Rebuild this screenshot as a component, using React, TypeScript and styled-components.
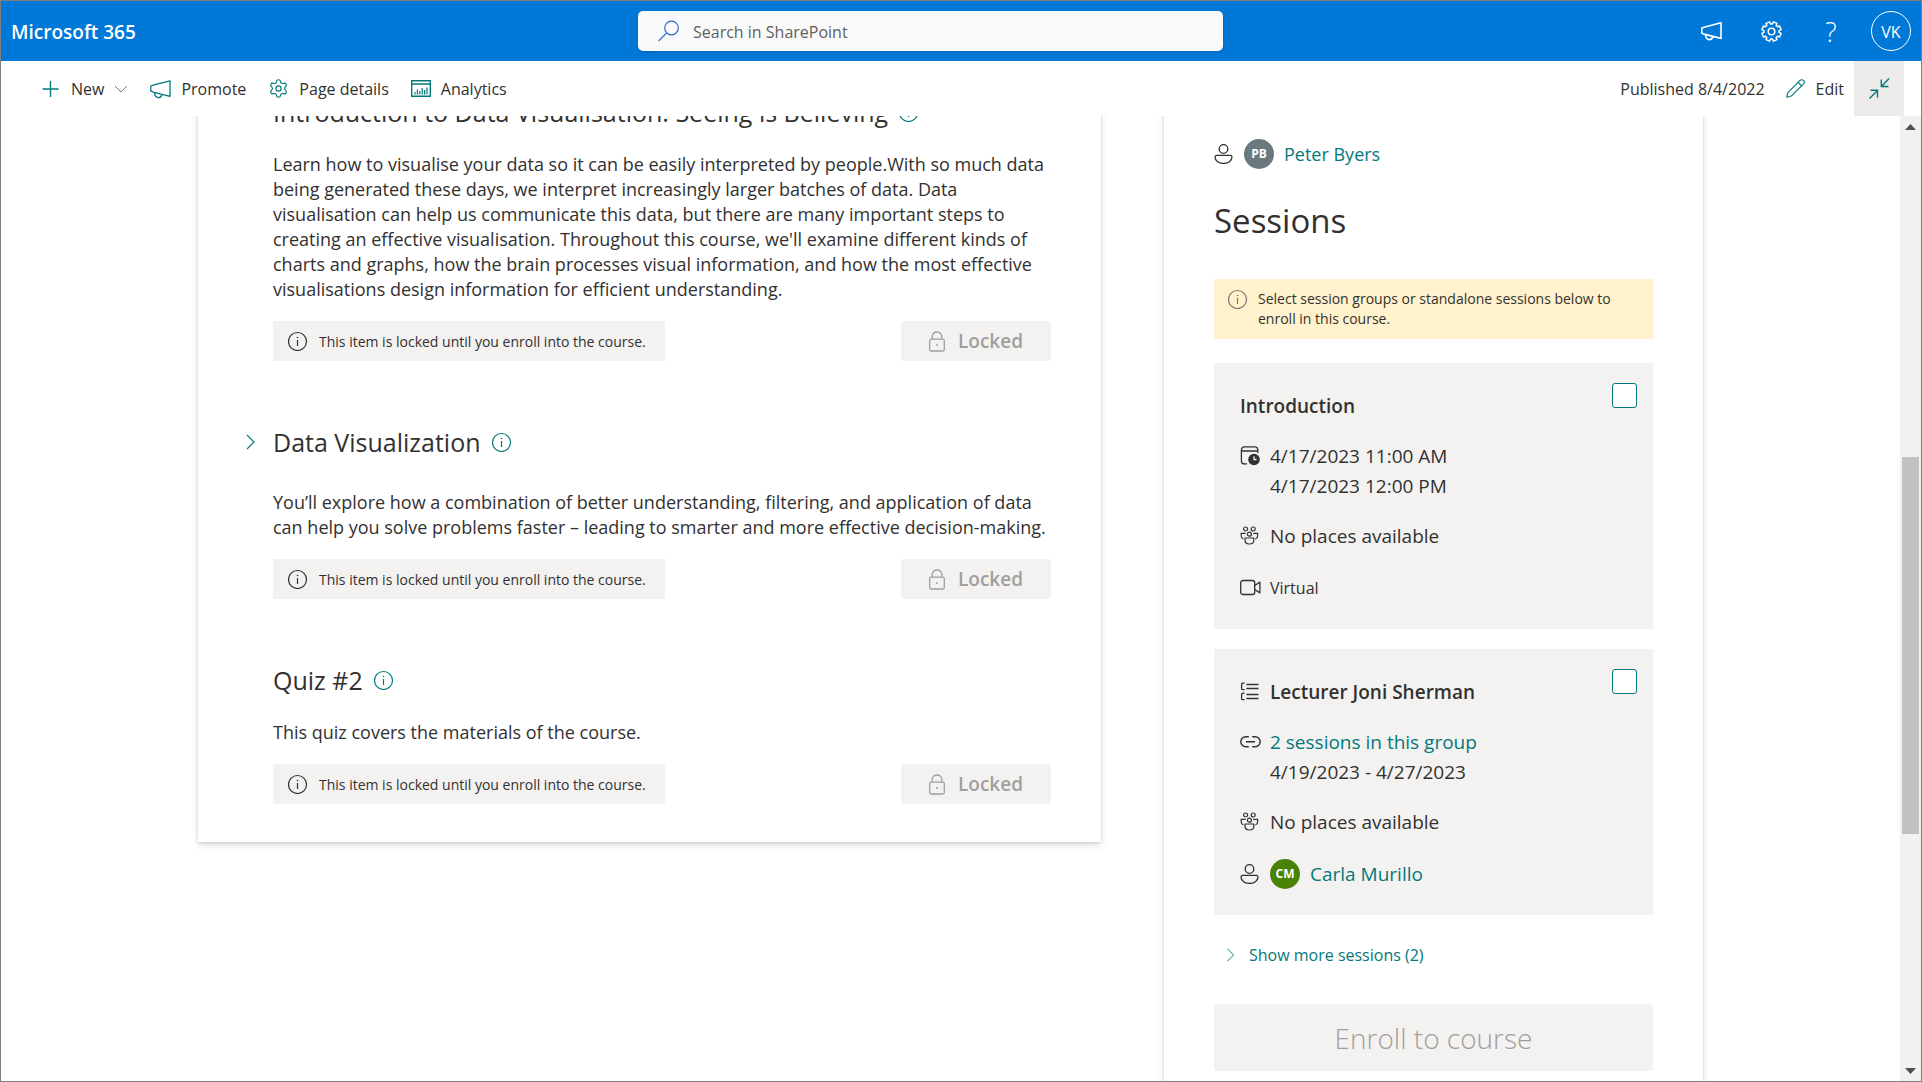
import React from "react";
import styled, { createGlobalStyle } from "styled-components";
import { Pencil, Settings } from "lucide-react";

const teal = "#03787c";
const ink = "#323130";
const wash = "#f3f2f1";
const muted = "#a19f9d";

const GlobalStyle = createGlobalStyle`
  *, *::before, *::after { box-sizing: border-box; }
  body { margin: 0; background: #fff; color: ${ink}; font: 18px/25px "Open Sans", "Noto Sans", sans-serif; }
  h1, h2, h3, p { margin: 0; font-weight: 400; }
  button, input { font: inherit; color: inherit; }
  button { border: 0; background: none; padding: 0; cursor: pointer; }
  a { color: ${teal}; text-decoration: none; }
  svg { display: block; flex: none; }
`;

/* ---------- icons ---------- */

const Glyph = ({ w = 20, h = 20, sw = 1.2, children }: { w?: number; h?: number; sw?: number; children: React.ReactNode }) => (
  <svg width={w} height={h} viewBox={`0 0 ${w} ${h}`} fill="none" stroke="currentColor" strokeWidth={sw} aria-hidden="true">
    {children}
  </svg>
);

const InfoIcon = () => (
  <Glyph>
    <circle cx="9.5" cy="10.5" r="9" />
    <path d="M9.5 9V15" />
    <circle cx="9.5" cy="6.5" r="0.8" fill="currentColor" stroke="none" />
  </Glyph>
);

const PlusIcon = () => (
  <Glyph sw={1.4}><path d="M9.5 2V18M1.5 10H17.5" /></Glyph>
);

const ChevronDown = () => (
  <Glyph w={14} h={14} sw={1}><path d="M1 4L7 10L13 4" /></Glyph>
);

const ChevronRight = ({ size = 16 }: { size?: number }) => (
  <svg width={size} height={size} viewBox="0 0 16 16" fill="none" stroke="currentColor" strokeWidth="1.1" aria-hidden="true">
    <path d="M4 1L11 8L4 15" />
  </svg>
);

const MegaphoneIcon = ({ sw = 1.3 }: { sw?: number }) => (
  <Glyph w={21} sw={sw}>
    <path d="M0.8 7L4 5.9L20 1.8V17.4L4 13.4L0.8 12.2Z" strokeLinejoin="round" />
    <path d="M4.6 13.6C4.6 16.6 6.2 18.6 8.3 18.6C10.2 18.6 11.5 17.4 11.9 15.5" />
  </Glyph>
);

const gearPath = (() => {
  const pts: string[] = [];
  const teeth = 8;
  for (let i = 0; i < teeth; i++) {
    const mid = (i / teeth) * Math.PI * 2 + Math.PI / 8;
    [[-0.27, 7.6], [-0.2, 9.8], [0.2, 9.8], [0.27, 7.6]].forEach(([d, r]) => {
      pts.push(`${(10.5 + Math.cos(mid + d) * r).toFixed(2)} ${(10.5 + Math.sin(mid + d) * r).toFixed(2)}`);
    });
  }
  return `M${pts.join("L")}Z`;
})();

const GearIcon = () => (
  <Glyph w={21} h={21} sw={1.5}>
    <path d={gearPath} strokeLinejoin="round" />
    <circle cx="10.5" cy="10.5" r="3.3" />
  </Glyph>
);

const SearchIcon = () => (
  <Glyph w={22} h={22} sw={1.2}>
    <circle cx="13.5" cy="8" r="6.8" />
    <path d="M8.7 12.8L0.6 21" />
  </Glyph>
);

const AnalyticsIcon = () => (
  <Glyph sw={1.4}>
    <path d="M0.7 1.7H19.3V17.3H0.7ZM0.7 5H19.3" />
    <path d="M4 15.5V13M6.4 15.5V10.5M8.8 15.5V12M11.2 15.5V9M13.6 15.5V11M16 15.5V8.5" strokeWidth="1.2" />
  </Glyph>
);

const CollapseIcon = () => (
  <Glyph w={21} h={21} sw={1.4}>
    <path d="M20 0.5L12.5 8.5M12.3 1.5V8.5H19.5" />
    <path d="M0.5 20.5L8.5 12.5M1.5 12.3H8.5V19.5" />
  </Glyph>
);

const LockIcon = () => (
  <Glyph w={16} h={21} sw={1.3}>
    <rect x="0.7" y="8.2" width="14.6" height="11.8" rx="1.5" />
    <path d="M3.2 8V5.6C3.2 2.9 5.3 1 8 1C10.7 1 12.8 2.9 12.8 5.6V8" />
    <circle cx="8" cy="14" r="1" fill="currentColor" stroke="none" />
  </Glyph>
);

const PersonIcon = () => (
  <Glyph sw={1.3}>
    <circle cx="9.5" cy="5" r="4.3" />
    <path d="M2.5 11.4H16.5A1.6 1.6 0 0 1 18 13C18 17 13.9 19.4 9.5 19.4S1 17 1 13A1.6 1.6 0 0 1 2.5 11.4Z" />
  </Glyph>
);

const CalendarIcon = () => (
  <Glyph sw={1.3}>
    <path d="M7 17.9H4.4A3 3 0 0 1 1.4 14.9V3.9A3 3 0 0 1 4.4 0.9H14.8A3 3 0 0 1 17.8 3.9V7M1.4 5H17.8" />
    <circle cx="14" cy="13.5" r="5.8" fill="currentColor" stroke="none" />
    <path d="M14 10.3V13.5H16.6" stroke={wash} />
  </Glyph>
);

const PeopleIcon = () => (
  <Glyph sw={1.2}>
    <circle cx="5.6" cy="3" r="2" />
    <circle cx="13.2" cy="3" r="2" />
    <circle cx="9.4" cy="8.2" r="2" />
    <path d="M5 12H13.8V14.2C13.8 16.6 11.8 18 9.4 18S5 16.6 5 14.2Z" strokeLinejoin="round" />
    <path d="M5.6 7.4H1.2V10C1.2 11.5 2.1 12.5 3.4 13M13.2 7.4H17.6V10C17.6 11.5 16.7 12.5 15.4 13" />
  </Glyph>
);

const VideoIcon = () => (
  <Glyph w={21} sw={1.3}>
    <rect x="0.7" y="2.5" width="14" height="14" rx="2.2" />
    <path d="M14.7 7.5L19.9 4.1V14.9L14.7 11.5" strokeLinejoin="round" />
  </Glyph>
);

const GroupListIcon = () => (
  <Glyph sw={1.3}>
    <path d="M4.6 1.1H2.8A1.2 1.2 0 0 0 1.6 2.3V6.5A1.2 1.2 0 0 0 2.8 7.7H4.6M4.6 11.1H2.8A1.2 1.2 0 0 0 1.6 12.3V16.5A1.2 1.2 0 0 0 2.8 17.7H4.6" />
    <path d="M6.4 2.5H18.5M6.4 6.5H18.5M6.4 12.5H18.5M6.4 16.5H18.5" />
  </Glyph>
);

const LinkIcon = () => (
  <Glyph w={21} sw={1.4}>
    <path d="M8.8 4.8H5.8A5 5 0 0 0 5.8 14.8H8.8M12.2 4.8H15.2A5 5 0 0 1 15.2 14.8H12.2M6 9.8H15" />
  </Glyph>
);

/* ---------- shell ---------- */

const Shell = styled.div`
  display: flex;
  flex-direction: column;
  height: 100vh;
  border: 1px solid #7f7f7f;
  overflow: hidden;
`;

const SuiteBar = styled.header`
  display: grid;
  grid-template-columns: 637fr 585fr 698fr;
  align-items: center;
  flex: none;
  height: 60px;
  background: #0078d7;
  color: #fff;
`;

const Brand = styled.a`
  display: block;
  padding: 2px 0 0 10px;
  color: #fff;
  font-size: 19px;
  font-weight: 600;
`;

const SearchBox = styled.label`
  display: flex;
  align-items: center;
  gap: 13px;
  height: 40px;
  padding: 0 20px;
  border-radius: 5px;
  background: #fafafa;
  color: #2b6cc4;
  box-shadow: 0 1px 3px rgba(0, 0, 0, 0.2);
`;

const SearchInput = styled.input`
  flex: 1;
  min-width: 0;
  border: 0;
  outline: 0;
  padding: 2px 0 0;
  background: none;
  color: #605e5c;
  font-size: 16px;
  &::placeholder { color: #605e5c; opacity: 1; }
`;

const SuiteActions = styled.nav`
  display: flex;
  justify-content: flex-end;
`;

const SuiteButton = styled.button`
  display: grid;
  place-items: center;
  width: 60px;
  height: 60px;
  font-size: 27px;
  font-weight: 300;
`;

const MeCircle = styled.span`
  display: grid;
  place-items: center;
  width: 40px;
  height: 40px;
  padding-top: 2px;
  border: 1px solid #fff;
  border-radius: 50%;
  font-size: 16px;
  font-weight: 500;
`;

const CommandBar = styled.div`
  display: flex;
  align-items: center;
  justify-content: space-between;
  flex: none;
  height: 55px;
  padding: 0 17px 0 30px;
  background: #fff;
`;

const CommandGroup = styled.div<{ $gap?: number }>`
  display: flex;
  align-items: center;
  gap: ${(p) => p.$gap ?? 0}px;
`;

const Command = styled.button`
  display: flex;
  align-items: center;
  gap: 10px;
  padding: 0 10px;
  font-size: 16px;
`;

const CommandIcon = styled.span`
  display: flex;
  color: ${teal};
`;

const CommandLabel = styled.span`
  padding-top: 2px;
`;

const Faint = styled.span`
  color: #797775;
`;

const Published = styled.span`
  padding: 2px 10px 0;
  font-size: 16px;
`;

const CollapseButton = styled.button`
  display: grid;
  place-items: center;
  width: 50px;
  height: 55px;
  background: #edebe9;
  color: ${teal};
`;

const Body = styled.div`
  display: flex;
  flex: 1;
  min-height: 0;
`;

const Viewport = styled.main`
  flex: 1;
  min-width: 0;
  overflow: hidden;
`;

/* The page sits part way down its scroll range. */
const Columns = styled.div`
  display: grid;
  grid-template-columns: 903fr 539fr;
  column-gap: 63px;
  align-items: start;
  max-width: 1505px;
  margin: -60px auto 0;
`;

const Sheet = styled.section`
  background: #fff;
  box-shadow: 0 3px 7px rgba(0, 0, 0, 0.13), 0 1px 2px rgba(0, 0, 0, 0.12);
`;

/* ---------- scroll bar ---------- */

const ScrollBar = styled.div`
  display: flex;
  flex-direction: column;
  flex: none;
  width: 21px;
  background: #f1f1f1;
`;

const ScrollArrow = styled.span`
  display: grid;
  place-items: center;
  height: 21px;
  color: #505050;
`;

const ScrollSpace = styled.span<{ $share: number }>`
  flex: ${(p) => p.$share};
`;

const ScrollThumb = styled.span`
  flex: 377;
  margin: 0 2px;
  background: #c1c1c1;
`;

/* ---------- course items ---------- */

const ItemList = styled(Sheet)`
  display: flex;
  flex-direction: column;
  gap: 65px;
  padding: 40px 50px 38px 75px;
`;

const ItemHead = styled.div<{ $spaced?: boolean }>`
  display: flex;
  align-items: center;
  gap: 11px;
  margin-bottom: ${(p) => (p.$spaced ? 32 : 24)}px;
  color: ${teal};
`;

const ExpandButton = styled.button`
  display: flex;
  justify-content: center;
  width: 22px;
  margin-left: -33px;
  color: ${teal};
`;

const ItemTitle = styled.h2`
  color: ${ink};
  font-size: 25px;
  line-height: 32px;
`;

const ItemText = styled.p`
  margin-bottom: 19px;
`;

const ItemFoot = styled.div`
  display: flex;
  justify-content: space-between;
`;

const Notice = styled.div`
  display: flex;
  align-items: center;
  gap: 11px;
  height: 40px;
  padding: 0 19px 0 15px;
  background: ${wash};
  font-size: 14px;
`;

const LockedButton = styled.button`
  display: flex;
  align-items: center;
  justify-content: center;
  gap: 13px;
  width: 150px;
  height: 40px;
  border-radius: 3px;
  background: ${wash};
  color: ${muted};
  font-size: 19px;
  font-weight: 600;
`;

/* ---------- sessions ---------- */

const SidePanel = styled(Sheet)`
  padding: 81px 50px 60px;
`;

const SideTitle = styled.h1`
  margin: 26px 0 34px;
  font-size: 33px;
  line-height: 48px;
`;

const Banner = styled.div`
  display: flex;
  gap: 10px;
  padding: 10px 14px;
  margin-bottom: 24px;
  background: #fff2cc;
  font-size: 14px;
  line-height: 20px;
`;

const BannerIcon = styled.span`
  color: #797775;
`;

const CardList = styled.div`
  display: flex;
  flex-direction: column;
  gap: 20px;
`;

const Card = styled.article`
  display: flex;
  justify-content: space-between;
  align-items: flex-start;
  padding: 20px 16px 24px 26px;
  background: ${wash};
`;

const CardRows = styled.div`
  display: flex;
  flex-direction: column;
  gap: 20px;
  padding-top: 8px;
  font-size: 19px;
`;

const Row = styled.div<{ $tall?: boolean; $small?: boolean }>`
  display: flex;
  align-items: ${(p) => (p.$tall ? "center" : "flex-start")};
  gap: 10px;
  min-height: ${(p) => (p.$tall ? 34 : 30)}px;
  font-size: ${(p) => (p.$small ? "16px" : "inherit")};
  line-height: 30px;
`;

const RowIcon = styled.span`
  display: flex;
  align-items: center;
  justify-content: center;
  width: 20px;
  height: 30px;
`;

const CardTitle = styled.h3`
  font-size: 19px;
  font-weight: 600;
  line-height: 30px;
`;

const Check = styled.input`
  appearance: none;
  width: 25px;
  height: 25px;
  margin: 0;
  border: 1px solid ${teal};
  border-radius: 3px;
  background: #fff;
`;

const Avatar = styled.span<{ $color: string }>`
  display: grid;
  place-items: center;
  width: 30px;
  height: 30px;
  border-radius: 50%;
  background: ${(p) => p.$color};
  color: #fff;
  font-size: 12px;
  font-weight: 700;
`;

const ShowMore = styled.button`
  display: flex;
  align-items: center;
  gap: 11px;
  margin: 28px 0 37px;
  padding-left: 10px;
  color: ${teal};
  font-size: 16px;
  line-height: 24px;
`;

const EnrollButton = styled.button`
  display: block;
  width: 100%;
  height: 67px;
  padding-top: 2px;
  border-radius: 3px;
  background: ${wash};
  color: ${muted};
  font-size: 28px;
  font-weight: 300;
`;

const items = [
  {
    title: "Introduction to Data Visualisation: Seeing is Believing",
    text: "Learn how to visualise your data so it can be easily interpreted by people.With so much data being generated these days, we interpret increasingly larger batches of data. Data visualisation can help us communicate this data, but there are many important steps to creating an effective visualisation. Throughout this course, we'll examine different kinds of charts and graphs, how the brain processes visual information, and how the most effective visualisations design information for efficient understanding.",
  },
  {
    title: "Data Visualization",
    expandable: true,
    text: "You’ll explore how a combination of better understanding, filtering, and application of data can help you solve problems faster – leading to smarter and more effective decision-making.",
  },
  { title: "Quiz #2", text: "This quiz covers the materials of the course." },
];

const Person = ({ initials, color, name }: { initials: string; color: string; name: string }) => (
  <Row $tall>
    <RowIcon><PersonIcon /></RowIcon>
    <Avatar $color={color}>{initials}</Avatar>
    <a href="#profile">{name}</a>
  </Row>
);

export default function App() {
  return (
    <>
      <GlobalStyle />
      <Shell>
        <SuiteBar>
          <div><Brand href="#home">Microsoft 365</Brand></div>
          <SearchBox>
            <SearchIcon />
            <SearchInput type="text" placeholder="Search in SharePoint" aria-label="Search in SharePoint" />
          </SearchBox>
          <SuiteActions>
            <SuiteButton aria-label="Announcements"><MegaphoneIcon sw={1.6} /></SuiteButton>
            <SuiteButton aria-label="Settings"><GearIcon /></SuiteButton>
            <SuiteButton aria-label="Help">?</SuiteButton>
            <SuiteButton aria-label="Account"><MeCircle>VK</MeCircle></SuiteButton>
          </SuiteActions>
        </SuiteBar>

        <CommandBar>
          <CommandGroup $gap={2}>
            <Command>
              <CommandIcon><PlusIcon /></CommandIcon>
              <CommandLabel>New</CommandLabel>
              <Faint><ChevronDown /></Faint>
            </Command>
            <Command><CommandIcon><MegaphoneIcon /></CommandIcon><CommandLabel>Promote</CommandLabel></Command>
            <Command><CommandIcon><Settings size={21} strokeWidth={1.3} /></CommandIcon><CommandLabel>Page details</CommandLabel></Command>
            <Command><CommandIcon><AnalyticsIcon /></CommandIcon><CommandLabel>Analytics</CommandLabel></Command>
          </CommandGroup>
          <CommandGroup>
            <Published>Published 8/4/2022</Published>
            <Command><CommandIcon><Pencil size={21} strokeWidth={1.3} /></CommandIcon><CommandLabel>Edit</CommandLabel></Command>
            <CollapseButton aria-label="Collapse"><CollapseIcon /></CollapseButton>
          </CommandGroup>
        </CommandBar>

        <Body>
          <Viewport>
            <Columns>
              <ItemList>
                {items.map((item) => (
                  <div key={item.title}>
                    <ItemHead $spaced={item.expandable}>
                      {item.expandable && (
                        <ExpandButton aria-label="Expand"><ChevronRight /></ExpandButton>
                      )}
                      <ItemTitle>{item.title}</ItemTitle>
                      <InfoIcon />
                    </ItemHead>
                    <ItemText>{item.text}</ItemText>
                    <ItemFoot>
                      <Notice><InfoIcon />This item is locked until you enroll into the course.</Notice>
                      <LockedButton disabled><LockIcon />Locked</LockedButton>
                    </ItemFoot>
                  </div>
                ))}
              </ItemList>

              <SidePanel>
                <Person initials="PB" color="#69797e" name="Peter Byers" />
                <SideTitle>Sessions</SideTitle>
                <Banner>
                  <BannerIcon><InfoIcon /></BannerIcon>
                  <p>Select session groups or standalone sessions below to enroll in this course.</p>
                </Banner>
                <CardList>
                  <Card>
                    <CardRows>
                      <CardTitle>Introduction</CardTitle>
                      <Row>
                        <RowIcon><CalendarIcon /></RowIcon>
                        <div><p>4/17/2023 11:00 AM</p><p>4/17/2023 12:00 PM</p></div>
                      </Row>
                      <Row><RowIcon><PeopleIcon /></RowIcon>No places available</Row>
                      <Row $tall $small><RowIcon><VideoIcon /></RowIcon>Virtual</Row>
                    </CardRows>
                    <Check type="checkbox" aria-label="Introduction" />
                  </Card>
                  <Card>
                    <CardRows>
                      <Row><RowIcon><GroupListIcon /></RowIcon><CardTitle>Lecturer Joni Sherman</CardTitle></Row>
                      <Row>
                        <RowIcon><LinkIcon /></RowIcon>
                        <div><p><a href="#group">2 sessions in this group</a></p><p>4/19/2023 - 4/27/2023</p></div>
                      </Row>
                      <Row><RowIcon><PeopleIcon /></RowIcon>No places available</Row>
                      <Person initials="CM" color="#498205" name="Carla Murillo" />
                    </CardRows>
                    <Check type="checkbox" aria-label="Lecturer Joni Sherman" />
                  </Card>
                </CardList>
                <ShowMore><ChevronRight size={14} />Show more sessions (2)</ShowMore>
                <EnrollButton disabled>Enroll to course</EnrollButton>
              </SidePanel>
            </Columns>
          </Viewport>
          <ScrollBar aria-hidden="true">
            <ScrollArrow><svg width="11" height="6"><path d="M0 6L5.5 0L11 6Z" fill="currentColor" /></svg></ScrollArrow>
            <ScrollSpace $share={320} />
            <ScrollThumb />
            <ScrollSpace $share={226} />
            <ScrollArrow><svg width="11" height="6"><path d="M0 0L5.5 6L11 0Z" fill="currentColor" /></svg></ScrollArrow>
          </ScrollBar>
        </Body>
      </Shell>
    </>
  );
}
